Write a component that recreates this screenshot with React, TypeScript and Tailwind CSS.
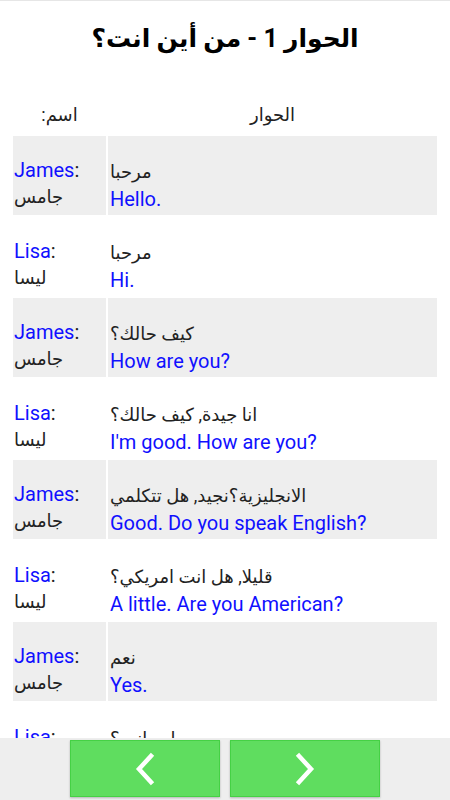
import React from 'react';

type Line = {
  name: string;
  nameAr: string;
  ar: string;
  en: string;
};

const lines: Line[] = [
  { name: 'James', nameAr: 'جامس', ar: 'مرحبا', en: 'Hello.' },
  { name: 'Lisa', nameAr: 'ليسا', ar: 'مرحبا', en: 'Hi.' },
  { name: 'James', nameAr: 'جامس', ar: 'كيف حالك؟', en: 'How are you?' },
  { name: 'Lisa', nameAr: 'ليسا', ar: 'انا جيدة, كيف حالك؟', en: "I'm good. How are you?" },
  { name: 'James', nameAr: 'جامس', ar: 'الانجليزية؟نجيد, هل تتكلمي', en: 'Good. Do you speak English?' },
  { name: 'Lisa', nameAr: 'ليسا', ar: 'قليلا, هل انت امريكي؟', en: 'A little. Are you American?' },
  { name: 'James', nameAr: 'جامس', ar: 'نعم', en: 'Yes.' },
  { name: 'Lisa', nameAr: 'ليسا', ar: 'من اين انت؟', en: 'Where are you from?' },
];

function Chevron({ dir }: { dir: 'left' | 'right' }) {
  return (
    <svg width="24" height="34" viewBox="0 0 24 34" fill="none">
      <polyline
        points={dir === 'left' ? '18,4 6,17 18,30' : '6,4 18,17 6,30'}
        stroke="white"
        strokeWidth="4.5"
        strokeLinecap="square"
        strokeLinejoin="miter"
      />
    </svg>
  );
}

export default function App() {
  return (
    <div
      className="flex flex-col h-[800px] w-[450px] bg-white text-[#222]"
      style={{ fontFamily: 'Roboto, "DejaVu Sans", sans-serif' }}
    >
      <div className="flex-1 overflow-hidden border-t border-[#e6e6e6]">
        <h1 className="h-[75px] flex items-center justify-center text-[25px] font-bold text-black">
          الحوار 1 - من أين انت؟
        </h1>

        <div className="mx-[13px] grid grid-cols-[93px_1fr] gap-[2px] mt-[18px]">
          <div className="h-[40px] flex items-center justify-center text-[18px]">:اسم</div>
          <div className="h-[40px] flex items-center justify-center text-[18px]">الحوار</div>

          {lines.map((l, i) => {
            const bg = i % 2 === 0 ? 'bg-[#eeeeee]' : 'bg-white';
            return (
              <React.Fragment key={i}>
                <div className={`h-[79px] pt-[20px] pl-[1px] ${bg}`}>
                  <div className="text-[20px] leading-[28px] text-[#1010ff]">
                    {l.name}<span className="text-[#222]">:</span>
                  </div>
                  <div className="text-[18px] leading-[26px]">{l.nameAr}</div>
                </div>
                <div className={`h-[79px] pt-[21px] pl-[2px] ${bg}`}>
                  <div className="text-[18px] leading-[29px]">{l.ar}</div>
                  <div className="text-[20px] leading-[26px] text-[#1010ff]">{l.en}</div>
                </div>
              </React.Fragment>
            );
          })}
        </div>
      </div>

      <div className="h-[62px] bg-[#eeeeee] flex justify-center gap-[10px] pt-[2px]">
        <button className="w-[150px] h-[57px] bg-[#5fdd5f] border border-[#45d145] shadow-[0_1px_2px_rgba(0,0,0,0.25)] flex items-center justify-center">
          <Chevron dir="left" />
        </button>
        <button className="w-[150px] h-[57px] bg-[#5fdd5f] border border-[#45d145] shadow-[0_1px_2px_rgba(0,0,0,0.25)] flex items-center justify-center">
          <Chevron dir="right" />
        </button>
      </div>
    </div>
  );
}
